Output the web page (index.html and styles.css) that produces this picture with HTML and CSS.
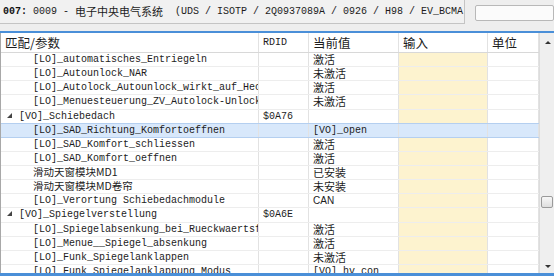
FILE: index.html
```html
<!DOCTYPE html>
<html lang="zh">
<head>
  <meta charset="UTF-8">
  <title>0009 - 电子中央电气系统</title>
  <link rel="stylesheet" href="styles.css">
</head>
<body>
  <div class="topbar">
    <div class="title"><b>007:</b> 0009 - <span class="zh">电子中央电气系统</span>&nbsp;&nbsp;(UDS / ISOTP / 2Q0937089A / 0926 / H98 / EV_BCMA</div>
    <div class="search"></div>
  </div>

  <div class="panel">
    <div class="table">
      <div class="row head">
        <div class="cell"><span class="zh">匹配/参数</span></div>
        <div class="cell">RDID</div>
        <div class="cell"><span class="zh">当前值</span></div>
        <div class="cell"><span class="zh">输入</span></div>
        <div class="cell"><span class="zh">单位</span></div>
      </div>

      <div class="row"><div class="cell child">[LO]_automatisches_Entriegeln</div><div class="cell"></div><div class="cell"><span class="zh">激活</span></div><div class="cell input"></div><div class="cell"></div></div>
      <div class="row"><div class="cell child">[LO]_Autounlock_NAR</div><div class="cell"></div><div class="cell"><span class="zh">未激活</span></div><div class="cell input"></div><div class="cell"></div></div>
      <div class="row"><div class="cell child">[LO]_Autolock_Autounlock_wirkt_auf_Heckklappe</div><div class="cell"></div><div class="cell"><span class="zh">激活</span></div><div class="cell input"></div><div class="cell"></div></div>
      <div class="row"><div class="cell child">[LO]_Menuesteuerung_ZV_Autolock-Unlock</div><div class="cell"></div><div class="cell"><span class="zh">未激活</span></div><div class="cell input"></div><div class="cell"></div></div>
      <div class="row"><div class="cell group"><span class="arrow"></span>[VO]_Schiebedach</div><div class="cell">$0A76</div><div class="cell"></div><div class="cell input"></div><div class="cell"></div></div>
      <div class="row selected"><div class="cell child">[LO]_SAD_Richtung_Komfortoeffnen</div><div class="cell"></div><div class="cell">[VO]_open</div><div class="cell input"></div><div class="cell"></div></div>
      <div class="row"><div class="cell child">[LO]_SAD_Komfort_schliessen</div><div class="cell"></div><div class="cell"><span class="zh">激活</span></div><div class="cell input"></div><div class="cell"></div></div>
      <div class="row"><div class="cell child">[LO]_SAD_Komfort_oeffnen</div><div class="cell"></div><div class="cell"><span class="zh">激活</span></div><div class="cell input"></div><div class="cell"></div></div>
      <div class="row"><div class="cell child"><span class="zh small">滑动天窗模块MD1</span></div><div class="cell"></div><div class="cell"><span class="zh">已安装</span></div><div class="cell input"></div><div class="cell"></div></div>
      <div class="row"><div class="cell child"><span class="zh small">滑动天窗模块MD卷帘</span></div><div class="cell"></div><div class="cell"><span class="zh">未安装</span></div><div class="cell input"></div><div class="cell"></div></div>
      <div class="row"><div class="cell child">[LO]_Verortung Schiebedachmodule</div><div class="cell"></div><div class="cell"><span class="sans">CAN</span></div><div class="cell input"></div><div class="cell"></div></div>
      <div class="row"><div class="cell group"><span class="arrow"></span>[VO]_Spiegelverstellung</div><div class="cell">$0A6E</div><div class="cell"></div><div class="cell input"></div><div class="cell"></div></div>
      <div class="row"><div class="cell child">[LO]_Spiegelabsenkung_bei_Rueckwaertsfahrt</div><div class="cell"></div><div class="cell"><span class="zh">激活</span></div><div class="cell input"></div><div class="cell"></div></div>
      <div class="row"><div class="cell child">[LO]_Menue__Spiegel_absenkung</div><div class="cell"></div><div class="cell"><span class="zh">激活</span></div><div class="cell input"></div><div class="cell"></div></div>
      <div class="row"><div class="cell child">[LO]_Funk_Spiegelanklappen</div><div class="cell"></div><div class="cell"><span class="zh">未激活</span></div><div class="cell input"></div><div class="cell"></div></div>
      <div class="row"><div class="cell child">[LO]_Funk_Spiegelanklappung_Modus</div><div class="cell"></div><div class="cell">[VO]_hv_con</div><div class="cell input"></div><div class="cell"></div></div>
    </div>

    <div class="scrollbar">
      <div class="sb-up"></div>
      <div class="sb-thumb"></div>
      <div class="sb-down"></div>
    </div>
  </div>
  <div class="bottom-line"></div>
</body>
</html>
```

FILE: styles.css
```css
* {
  margin: 0;
  padding: 0;
  box-sizing: border-box;
}

body {
  width: 554px;
  height: 276px;
  overflow: hidden;
  background: #eeeeee;
  font-family: "Liberation Mono", "Noto Sans CJK SC", monospace;
  font-size: 10px;
  color: #1c1c1c;
}

.zh {
  font-family: "Noto Sans CJK SC", sans-serif;
  font-size: 11px;
  line-height: 12px;
  vertical-align: top;
}

.zh.small {
  font-size: 10.5px;
}

.sans {
  font-family: "Liberation Sans", sans-serif;
  font-size: 10px;
}

/* barre du haut */
.topbar {
  display: flex;
  height: 33px;
  border-bottom: 2px solid #4a8fd8;
}

.title {
  width: 470px;
  height: 24px;
  padding: 5px 0 0 3px;
  line-height: 13px;
  white-space: nowrap;
  overflow: hidden;
  background: #f1f1f1;
  border-right: 1px solid #c4c4c4;
  border-bottom: 1px solid #c4c4c4;
}

.title b {
  color: #111;
}

.search {
  width: 80px;
  height: 16px;
  margin: 5px 0 0 10px;
  background: #fbfbfb;
  border: 1px solid #b8b8b8;
  border-radius: 2px;
}

/* tableau */
.panel {
  display: flex;
  height: 240px;
  overflow: hidden;
  background: #fff;
  border-left: 1px solid #a8a8a8;
}

.table {
  width: 538px;
}

.row {
  display: grid;
  grid-template-columns: 258px 50px 90px 89px 51px;
  height: 14.14px;
  line-height: 13px;
  border-bottom: 1px solid #ededed;
}

.row.head {
  height: 20px;
  line-height: 19px;
  border-bottom: 1px solid #d8d8d8;
}

.row.head .zh {
  font-size: 12.5px;
  line-height: 19px;
}

.cell {
  padding-left: 4px;
  white-space: nowrap;
  overflow: hidden;
  border-right: 1px solid #e2e2e2;
}

.cell.child {
  padding-left: 32px;
}

.cell.group {
  padding-left: 6px;
}

.arrow {
  display: inline-block;
  width: 0;
  height: 0;
  margin-right: 7px;
  border-left: 5px solid transparent;
  border-bottom: 5px solid #444;
  vertical-align: 1px;
}

.cell.input {
  background: #fdf3cf;
}

.row.selected {
  background: #d8e8fb;
  border-top: 1px solid #b4cff0;
  border-bottom: 1px solid #b4cff0;
  margin-top: -1px;
  height: 15.14px;
}

.row.selected .cell.input {
  background: transparent;
}

/* barre de défilement */
.scrollbar {
  position: relative;
  width: 15px;
  background: #efefef;
  border-left: 1px solid #dcdcdc;
}

.sb-up,
.sb-down {
  position: absolute;
  left: 5px;
  width: 0;
  height: 0;
  border-left: 3px solid transparent;
  border-right: 3px solid transparent;
}

.sb-up {
  top: 8px;
  border-bottom: 3px solid #333;
}

.sb-down {
  bottom: 5px;
  border-top: 3px solid #333;
}

.sb-thumb {
  position: absolute;
  top: 163px;
  left: 1px;
  width: 12px;
  height: 12px;
  background: linear-gradient(#f7f7f7, #dedede);
  border: 1px solid #9a9a9a;
  border-radius: 2px;
}

.bottom-line {
  height: 3px;
  background: #4a8fd8;
}
```
